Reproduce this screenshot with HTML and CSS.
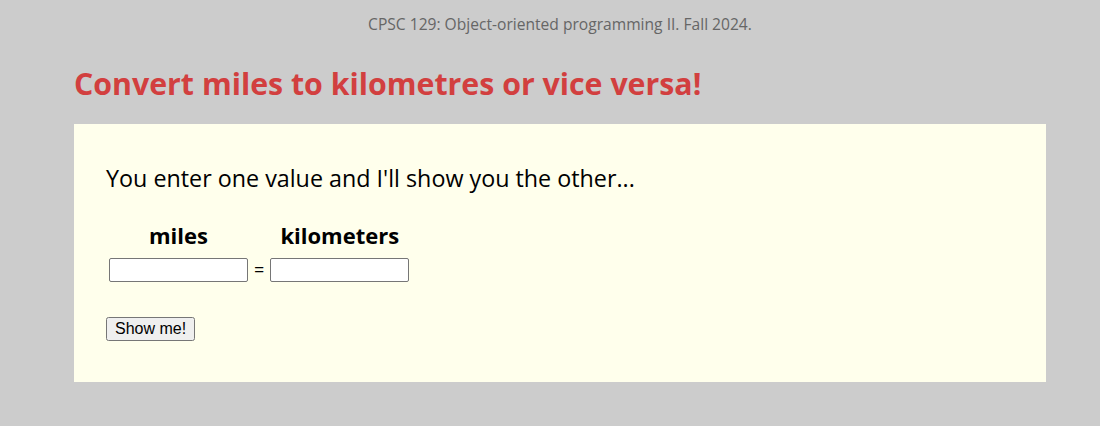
FILE: index.html
```html
<!DOCTYPE html>
<html>
<head>
<meta charset="utf-8">
<link rel="stylesheet" href="styles.css">
</head>
<body>
<p class="course">CPSC 129: Object-oriented programming II. Fall 2024.</p>
<h1 class="title">Convert miles to kilometres or vice versa!</h1>
<div class="panel">
  <p class="intro">You enter one value and I'll show you the other...</p>
  <table class="conv">
    <tr><th>miles</th><th></th><th>kilometers</th></tr>
    <tr><td><input class="field" type="text"></td><td class="eq">=</td><td><input class="field" type="text"></td></tr>
  </table>
  <button class="btn">Show me!</button>
</div>
</body>
</html>
```
FILE: styles.css
```css
html, body { margin: 0; padding: 0; }
body {
  background: #cccccc;
  font-family: "Open Sans", "DejaVu Sans", sans-serif;
  padding: 0 54px 0 74px;
}
.course {
  margin: 0;
  padding-top: 13px;
  height: 24px;
  text-align: center;
  font-size: 15.6px;
  line-height: 22px;
  color: #666666;
}
.title {
  margin: 27px 0 0 0;
  font-size: 30.3px;
  line-height: 40px;
  color: #d23f3f;
  font-weight: 700;
  height: 60px;
}
.panel {
  background: #ffffec;
  padding: 38px 32px 41px 32px;
}
.intro {
  margin: 0 0 24px 0;
  font-size: 23.3px;
  line-height: 32px;
  color: #000;
}
.conv { border-spacing: 2px; margin: 0 0 32px 0; }
.conv th { font-size: 22px; padding: 1px 1px 5px 1px; line-height: 28px; }
.conv td { padding: 1px; }
.conv .eq { font-size: 18px; padding: 1px 3px; }
.field {
  box-sizing: border-box;
  width: 139px;
  height: 24px;
  margin: 0;
  border: 1px solid #767676;
  border-radius: 2px;
  background: #fff;
}
.btn {
  font-family: "Liberation Sans", Arial, sans-serif;
  font-size: 16px;
  height: 24px;
  padding: 1px 7px;
  margin: 0;
}
```
